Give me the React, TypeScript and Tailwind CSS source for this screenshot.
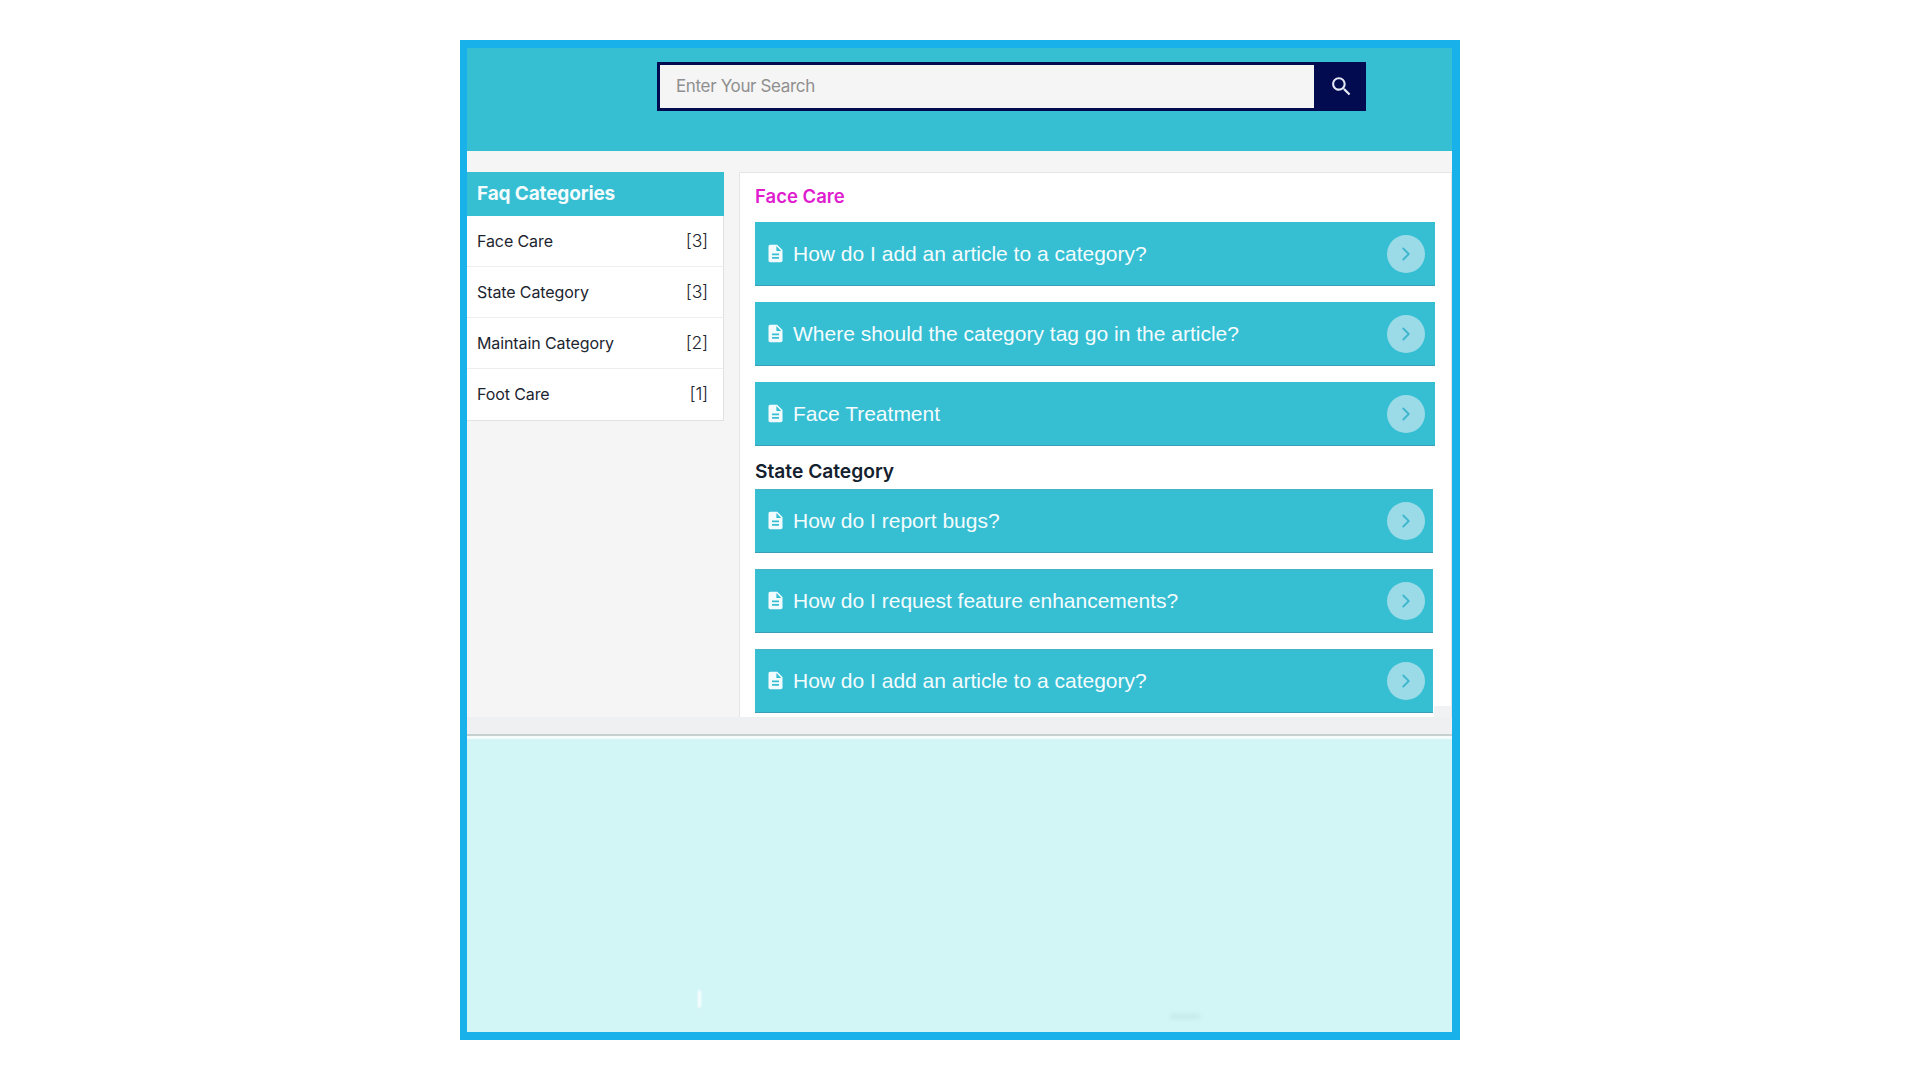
import React from 'react';
import { ChevronRight } from 'lucide-react';

const categories = [
  { name: 'Face Care', count: 3 },
  { name: 'State Category', count: 3 },
  { name: 'Maintain Category', count: 2 },
  { name: 'Foot Care', count: 1 },
];

const faceCare = [
  'How do I add an article to a category?',
  'Where should the category tag go in the article?',
  'Face Treatment',
];

const stateCategory = [
  'How do I report bugs?',
  'How do I request feature enhancements?',
  'How do I add an article to a category?',
];

const DocIcon = () => (
  <svg viewBox="0 0 24 24" className="w-[21px] h-[21px] -mt-[1px] shrink-0" fill="#f2fbfd">
    <path d="M14 2H6c-1.1 0-1.99.9-1.99 2L4 20c0 1.1.89 2 1.99 2H18c1.1 0 2-.9 2-2V8l-6-6zm2 16H8v-2h8v2zm0-4H8v-2h8v2zm-3-5V3.5L18.5 9H13z" />
  </svg>
);

const SearchIcon = () => (
  <svg viewBox="0 0 24 24" className="w-[25px] h-[25px] ml-[3px]" fill="#e4e6f4">
    <path d="M15.5 14h-.79l-.28-.27C15.41 12.59 16 11.11 16 9.5 16 5.91 13.09 3 9.5 3S3 5.91 3 9.5 5.91 16 9.5 16c1.61 0 3.09-.59 4.23-1.57l.27.28v.79l5 4.99L20.49 19l-4.99-5zm-6 0C7.01 14 5 11.99 5 9.5S7.01 5 9.5 5 14 7.01 14 9.5 11.99 14 9.5 14z" />
  </svg>
);

const QuestionRow = ({ text, narrow }: { text: string; narrow?: boolean }) => (
  <div
    className={`h-[64px] bg-[#36bed3] border-b border-[#3a9fb4] flex items-center pl-[10px] ${
      narrow ? 'mr-[2px] pr-[8px] border-t border-t-[#45b2c6]' : 'pr-[10px]'
    }`}
  >
    <DocIcon />
    <span className="ml-[7px] flex-1 text-[21px] text-[#f4fcfd] font-['Liberation_Sans',sans-serif]">{text}</span>
    <div className="w-[38px] h-[38px] rounded-full bg-[#9adbe7] flex items-center justify-center">
      <ChevronRight className="w-[22px] h-[22px] text-[#3fb6cf]" strokeWidth={2} />
    </div>
  </div>
);

export default function App() {
  return (
    <div className="min-h-[1080px] bg-white flex justify-center pt-[40px] font-['Inter',sans-serif]">
      <div className="w-[1000px] h-[1000px] border-t-[8px] border-b-[8px] border-l-[7px] border-r-[8px] border-[#18b1ea] flex flex-col">
        {/* Search header */}
        <div className="h-[103px] shrink-0 bg-[#36bed3] pt-[14px] pl-[190px]">
          <div className="w-[709px] h-[49px] flex bg-[#020b4f]">
            <div className="w-[657px] h-full border-[3px] border-r-0 border-[#020b4f] bg-[#f5f5f5] flex items-center pl-[16px] text-[17px] text-[#8f8f8f] tracking-[-0.35px]">
              Enter Your Search
            </div>
            <div className="flex-1 flex items-center justify-center">
              <SearchIcon />
            </div>
          </div>
        </div>

        {/* Categories and questions */}
        <div className="h-[566px] shrink-0 bg-[#f5f5f5] pt-[21px] flex gap-[15px]">
          <div className="w-[257px] shrink-0 self-start">
            <div className="h-[44px] bg-[#36bed3] flex items-center pl-[10px] text-[19px] font-bold text-[#f4fcfd] tracking-[-0.15px]">
              Faq Categories
            </div>
            <div className="bg-white border-r border-b border-[#e2e2e2]">
              {categories.map((c, i) => (
                <div
                  key={c.name}
                  className={`h-[51px] flex items-center justify-between pl-[10px] pr-[15px] text-[#1c2530] ${
                    i < 3 ? 'border-b border-[#eeeeee]' : 'pb-px'
                  }`}
                >
                  <span className="text-[16px] tracking-[-0.1px]">{c.name}</span>
                  <span className="text-[17.5px] font-light mt-[1px] tracking-[-0.2px]">[{c.count}]</span>
                </div>
              ))}
            </div>
          </div>

          <div className="relative flex-1 bg-white border border-b-0 border-[#e6e6e6] pl-[15px] pr-[16px] overflow-hidden">
            <div className="h-[49px] pb-[1px] flex items-center text-[18.5px] font-semibold text-[#e01ccf]">
              Face Care
            </div>
            <div className="flex flex-col gap-[16px]">
              {faceCare.map((q) => (
                <QuestionRow key={q} text={q} />
              ))}
            </div>
            <div className="h-[43px] pt-[8px] flex items-center text-[19.2px] font-semibold text-[#14212e]">
              State Category
            </div>
            <div className="flex flex-col gap-[16px]">
              {stateCategory.map((q) => (
                <QuestionRow key={q} text={q} narrow />
              ))}
            </div>
            <div className="absolute right-0 bottom-0 w-[17px] h-[11px] bg-[#f1f2f4]" />
          </div>
        </div>

        <div className="h-[17px] shrink-0 bg-[#eff0f2]" />
        <div className="h-[2px] shrink-0 bg-[#c6d0d0]" />
        <div className="h-[3px] shrink-0 bg-[#f4fbfb]" />

        {/* Empty lower panel */}
        <div className="relative flex-1 bg-[#d2f5f6]">
          <div className="absolute left-[231px] top-[251px] w-[3px] h-[18px] rounded-full bg-white/90 blur-[1px]" />
          <div className="absolute left-[703px] top-[276px] w-[30px] h-[3px] rounded-full bg-[#bfe3e3] blur-[2px]" />
        </div>
      </div>
    </div>
  );
}
